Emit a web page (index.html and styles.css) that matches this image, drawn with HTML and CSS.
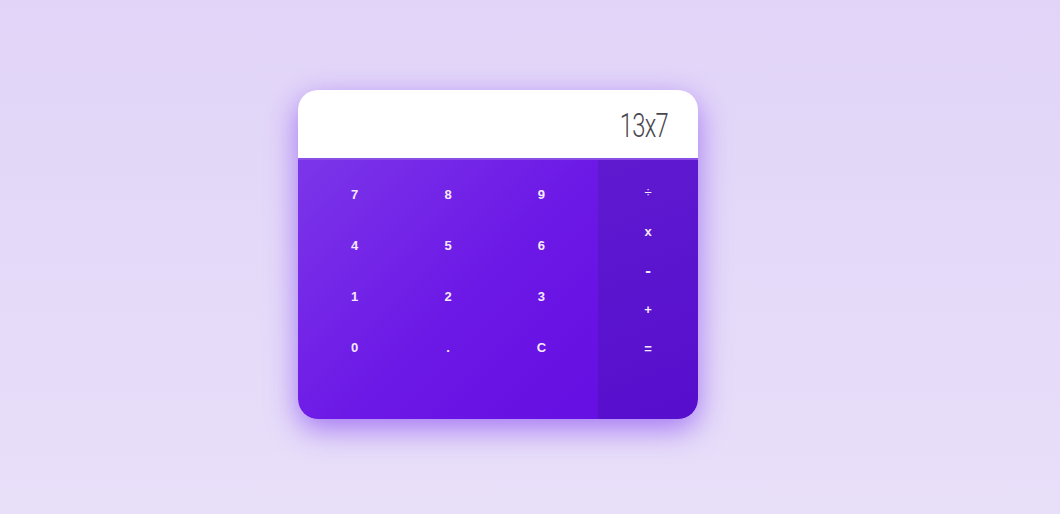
FILE: index.html
```html
<!DOCTYPE html>
<html>
<head>
<meta charset="utf-8">
<link rel="stylesheet" href="styles.css">
</head>
<body>
<div class="page">
  <div class="calc">
    <div class="display"><span class="value">13x7</span></div>
    <div class="pad">
      <div class="nums">
        <button class="key">7</button>
        <button class="key">8</button>
        <button class="key">9</button>
        <button class="key">4</button>
        <button class="key">5</button>
        <button class="key">6</button>
        <button class="key">1</button>
        <button class="key">2</button>
        <button class="key">3</button>
        <button class="key">0</button>
        <button class="key">.</button>
        <button class="key">C</button>
      </div>
      <div class="ops">
        <button class="key op thin">÷</button>
        <button class="key op">x</button>
        <button class="key op big">-</button>
        <button class="key op">+</button>
        <button class="key op">=</button>
      </div>
    </div>
  </div>
</div>
</body>
</html>
```

FILE: styles.css
```css
html, body {
  margin: 0;
  height: 100%;
}
body {
  background: linear-gradient(180deg, #e1d4f8 0%, #e8dff9 100%);
  font-family: "Liberation Sans", Arial, sans-serif;
}
.page {
  display: flex;
  padding: 90px 0 0 298px;
}
.calc {
  width: 400px;
  height: 329px;
  border-radius: 20px;
  overflow: hidden;
  display: flex;
  flex-direction: column;
  box-shadow: 0 10px 30px rgba(120, 50, 240, 0.6);
  background: #fff;
}
.display {
  height: 68px;
  flex: none;
  display: flex;
  align-items: center;
  justify-content: flex-end;
  padding: 2px 30px 0 0;
  box-sizing: border-box;
}
.value {
  display: inline-block;
  font-family: Roboto, sans-serif;
  font-weight: 300;
  font-size: 33px;
  color: #4a4650;
  letter-spacing: -1px;
  transform: scaleX(0.72);
  transform-origin: right center;
}
.pad {
  flex: 1;
  display: flex;
  border-top: 2px solid #8a4ee6;
}
.nums {
  width: 300px;
  box-sizing: border-box;
  padding: 9px 10px 0;
  display: grid;
  grid-template-columns: repeat(3, 1fr);
  grid-auto-rows: 51px;
  align-content: start;
  background: linear-gradient(135deg, #7c36e9 0%, #6c18e6 55%, #650fe2 100%);
}
.ops {
  flex: 1;
  padding: 13px 0 0;
  display: grid;
  grid-auto-rows: 39px;
  align-content: start;
  background: linear-gradient(160deg, #5f1ad0 0%, #570ecd 100%);
}
.key {
  border: 0;
  background: transparent;
  color: #f7eaff;
  font-family: "Liberation Sans", Arial, sans-serif;
  font-weight: bold;
  font-size: 13px;
  padding: 0;
  display: flex;
  align-items: center;
  justify-content: center;
}
.op.thin {
  font-weight: normal;
}
.op.big {
  font-size: 17px;
}
```
